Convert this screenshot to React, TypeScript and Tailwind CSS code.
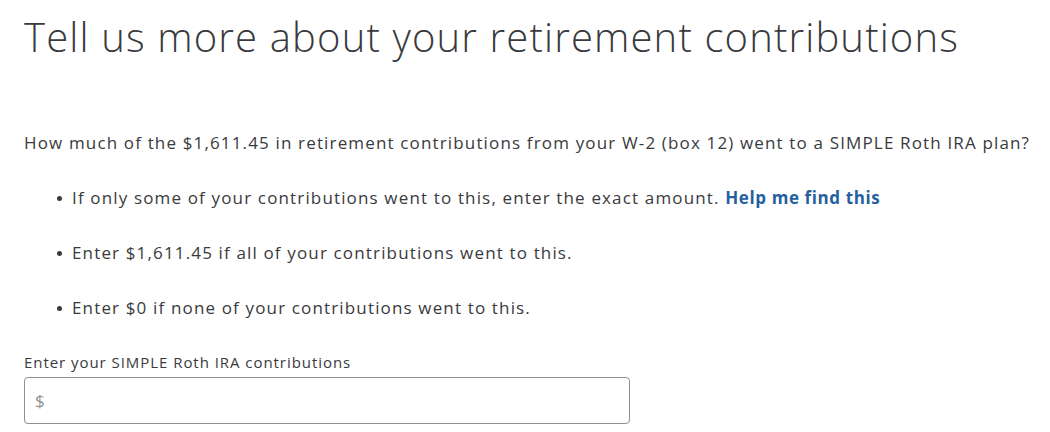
export default function App() {
  const font = { fontFamily: '"Open Sans", "Noto Sans", sans-serif' };
  return (
    <div className="bg-white w-[1050px] h-[432px] overflow-hidden text-[#393a3d]" style={font}>
      <div className="pl-6 pt-[11px]">
        <h1 className="text-[40px] leading-[52px] font-light tracking-[1.15px]">
          Tell us more about your retirement contributions
        </h1>
        <p className="mt-[68px] text-[17px] leading-[24px] tracking-[1.15px]">
          How much of the $1,611.45 in retirement contributions from your W-2 (box 12) went to a SIMPLE Roth IRA plan?
        </p>
        <ul className="mt-[31px] pl-[33px] flex flex-col gap-[31px] text-[17px] leading-[24px] tracking-[1.15px]">
          <li className="flex items-center gap-[10px]">
            <span className="w-[5px] h-[5px] rounded-full bg-[#393a3d]" />
            <span>
              If only some of your contributions went to this, enter the exact amount.{" "}
              <span className="font-bold text-[#255f9e] tracking-[0.6px]">Help me find this</span>
            </span>
          </li>
          <li className="flex items-center gap-[10px]">
            <span className="w-[5px] h-[5px] rounded-full bg-[#393a3d]" />
            <span>Enter $1,611.45 if all of your contributions went to this.</span>
          </li>
          <li className="flex items-center gap-[10px]">
            <span className="w-[5px] h-[5px] rounded-full bg-[#393a3d]" />
            <span>Enter $0 if none of your contributions went to this.</span>
          </li>
        </ul>
        <div className="mt-[32px] text-[15px] leading-[20px] tracking-[0.95px]">Enter your SIMPLE Roth IRA contributions</div>
        <div className="mt-[5px] w-[606px] h-[47px] border border-[#8d9096] rounded-[4px] flex items-center pl-[10px] text-[17px] text-[#8d9096]">
          $
        </div>
      </div>
    </div>
  );
}
